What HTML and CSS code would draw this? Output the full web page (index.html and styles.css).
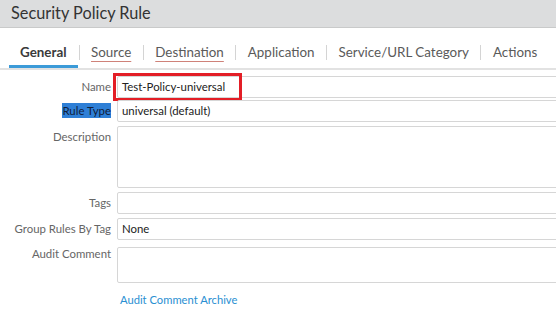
FILE: index.html
```html
<!DOCTYPE html>
<html>
<head>
<meta charset="utf-8">
<link rel="stylesheet" href="styles.css">
</head>
<body>
<div class="dialog">
  <div class="titlebar">Security Policy Rule</div>
  <div class="tabs">
    <span class="tab active">General</span><span class="sep"></span>
    <span class="tab err">Source</span><span class="sep"></span>
    <span class="tab err">Destination</span><span class="sep"></span>
    <span class="tab">Application</span><span class="sep"></span>
    <span class="tab">Service/URL Category</span><span class="sep"></span>
    <span class="tab">Actions</span>
  </div>
  <div class="form">
    <div class="row r-name">
      <label class="lbl">Name</label>
      <div class="field">Test-Policy-universal<span class="redbox"></span></div>
    </div>
    <div class="row r-type">
      <label class="lbl"><span class="sel">Rule Type</span></label>
      <div class="field">universal (default)</div>
    </div>
    <div class="row r-desc">
      <label class="lbl">Description</label>
      <div class="field area desc"></div>
    </div>
    <div class="row r-tags">
      <label class="lbl">Tags</label>
      <div class="field"></div>
    </div>
    <div class="row r-group">
      <label class="lbl">Group Rules By Tag</label>
      <div class="field">None</div>
    </div>
    <div class="row r-audit">
      <label class="lbl lbl-audit">Audit Comment</label>
      <div class="field area audit"></div>
    </div>
    <div class="row r-link">
      <span class="lbl"></span>
      <a class="link">Audit Comment Archive</a>
    </div>
  </div>
</div>
</body>
</html>
```

FILE: styles.css
```css
html, body {
  margin: 0;
  padding: 0;
  background: #ffffff;
  overflow: hidden;
}
body {
  font-family: Lato, "Open Sans", sans-serif;
  width: 556px;
  height: 320px;
}
.titlebar {
  height: 28px;
  box-sizing: border-box;
  background: #dcddde;
  border-bottom: 1px solid #c9caca;
  color: #333333;
  font-size: 16.3px;
  line-height: 26px;
  padding-left: 11px;
}
.tabs {
  display: flex;
  align-items: center;
  height: 42px;
  box-sizing: border-box;
  padding: 11px 0 0 9px;
  border-bottom: 2px solid #e2e2e2;
  white-space: nowrap;
}
.tab {
  flex: none;
  font-size: 13.4px;
  color: #5a5a5a;
  padding: 0 10.5px;
  height: 29px;
  line-height: 27px;
  box-sizing: border-box;
}
.tab.active {
  font-weight: bold;
  color: #3a3a3a;
  border-bottom: 3px solid #3c9bd8;
  padding: 0 11px;
}
.tab.err {
  text-decoration: underline;
  text-decoration-color: #cf8279;
  text-underline-offset: 4px;
  text-decoration-thickness: 1px;
}
.sep {
  flex: none;
  width: 1px;
  height: 15px;
  background: #d4d4d4;
  margin: 0 1px;
  align-self: center;
  position: relative;
  top: -1px;
}
.form {
  display: flex;
  flex-direction: column;
  padding-top: 6px;
}
.row {
  display: flex;
  align-items: flex-start;
}
.lbl {
  width: 111px;
  flex: none;
  text-align: right;
  font-size: 11.4px;
  color: #666666;
  line-height: 22px;
  margin-right: 6px;
  white-space: nowrap;
}
.sel {
  background: #2e7fd6;
  color: #10203a;
  padding: 1px 0;
}
.field {
  position: relative;
  flex: 1;
  margin-right: -4px;
  height: 22px;
  box-sizing: border-box;
  border: 1px solid #d6d6d6;
  border-radius: 2px;
  font-size: 11.4px;
  color: #222222;
  line-height: 20px;
  padding-left: 4px;
}
.redbox {
  position: absolute;
  left: -5px;
  top: -4px;
  width: 129px;
  height: 28px;
  box-sizing: border-box;
  border: 3px solid #e31e26;
}
.r-type { margin-top: 2px; }
.r-desc { margin-top: 4px; }
.desc { height: 62px; }
.r-tags { margin-top: 4px; }
.r-group { margin-top: 4px; }
.r-audit { margin-top: 7px; }
.audit { height: 36px; }
.lbl-audit { line-height: 14px; }
.r-link { margin-top: 10px; }
.link {
  font-size: 11.2px;
  color: #2a8fd2;
  margin-left: 3px;
  line-height: 14px;
}
```
